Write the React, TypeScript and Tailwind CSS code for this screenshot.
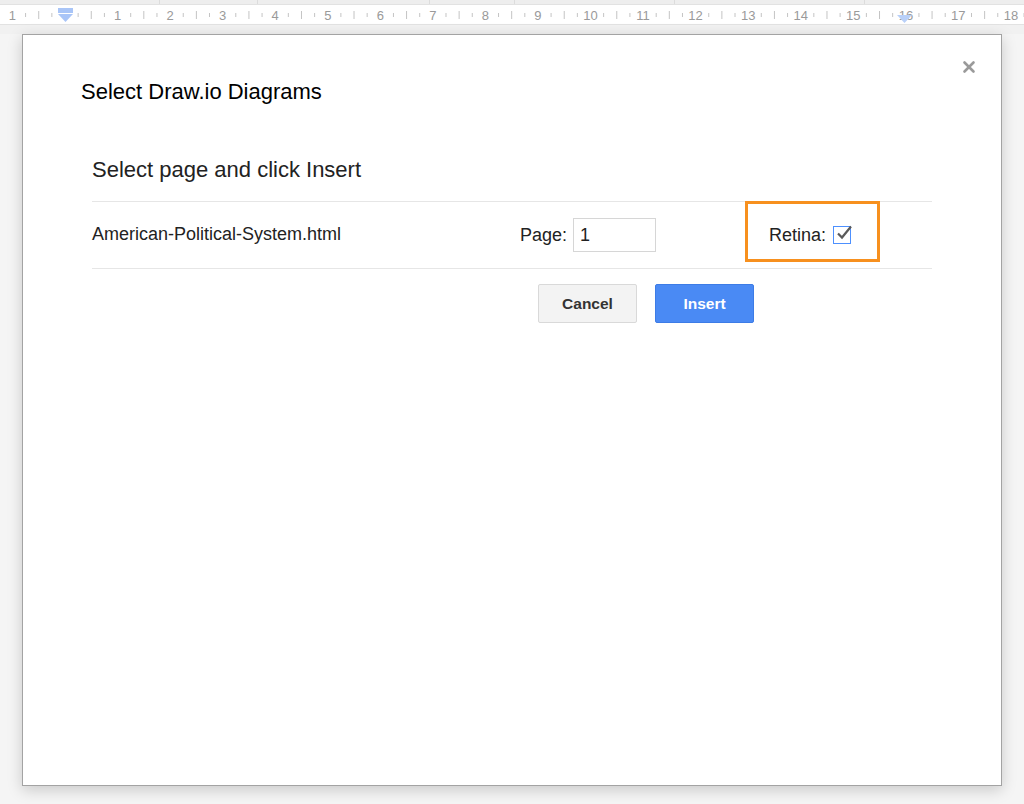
import { X } from 'lucide-react'

const UNIT = 52.55
const ORIGIN = 65

function Ruler() {
  const nums = Array.from({ length: 20 }, (_, i) => i - 1)
  return (
    <div className="h-[34px] bg-[#f1f1f1] shrink-0">
      <div className="h-[4px] bg-[#eeeeee] flex">
        <span className="w-[160px] border-r border-[#dcdcdc]" />
        <span className="w-[98px] border-r border-[#dcdcdc]" />
        <span className="w-[172px] border-r border-[#dcdcdc]" />
        <span className="w-[85px] border-r border-[#dcdcdc]" />
        <span className="w-[160px] border-r border-[#dcdcdc]" />
        <span className="w-[190px] border-r border-[#dcdcdc]" />
      </div>
      <svg width="1024" height="21" className="block bg-white border-y border-[#e2e2e2]">
        {nums.map((n) => {
          const x = ORIGIN + n * UNIT
          return (
            <g key={n}>
              {n !== 0 && n !== 16 && (
                <text
                  x={x}
                  y={14.5}
                  textAnchor="middle"
                  fontSize="13"
                  fill="#9a9a9a"
                  fontFamily="'Liberation Sans', Arial, sans-serif"
                >
                  {n === -1 ? 1 : n}
                </text>
              )}
              <line x1={x + UNIT / 4} x2={x + UNIT / 4} y1={8} y2={12} stroke="#c4c4c4" />
              <line x1={x + UNIT / 2} x2={x + UNIT / 2} y1={6} y2={14} stroke="#c4c4c4" />
              <line x1={x + (UNIT * 3) / 4} x2={x + (UNIT * 3) / 4} y1={8} y2={12} stroke="#c4c4c4" />
            </g>
          )
        })}
        <text x={906} y={14.5} textAnchor="middle" fontSize="13" fill="#9a9a9a" fontFamily="'Liberation Sans', Arial, sans-serif">
          16
        </text>
        <rect x={58} y={3} width={15} height={5} fill="#a9c5f7" />
        <polygon points="58,9 73,9 65.5,17" fill="#a9c5f7" />
        <polygon points="897,10 912,10 904.5,18" fill="#b9d0f8" />
      </svg>
    </div>
  )
}

function Checkbox() {
  return (
    <span className="relative w-[18px] h-[18px] border border-[#4d90fe] bg-white">
      <svg width="18" height="18" viewBox="0 0 18 18" className="absolute left-[1px] -top-[3px]">
        <path d="M3 9.5 L7 13.5 L16 2.5" fill="none" stroke="#5a5a5a" strokeWidth="2.2" />
      </svg>
    </span>
  )
}

export default function App() {
  return (
    <div
      className="w-[1024px] h-[804px] bg-[#f5f5f5] flex flex-col overflow-hidden"
      style={{ fontFamily: "'Liberation Sans', Arial, sans-serif" }}
    >
      <Ruler />
      <div className="pl-[22px]">
        <div className="w-[980px] h-[752px] bg-white border border-[#a3a3a3] shadow-[0_4px_14px_rgba(0,0,0,0.18)] flex flex-col">
          <div className="flex items-start justify-between pl-[58px] pr-[23px] pt-[44px]">
            <h1 className="text-[22px] leading-[26px] text-black">Select Draw.io Diagrams</h1>
            <X className="w-[18px] h-[18px] text-[#9a9a9a] -mt-[21px]" strokeWidth={3.5} />
          </div>

          <div className="px-[69px] pt-[52px]">
            <h2 className="text-[22px] leading-[26px] text-[#222]">Select page and click Insert</h2>

            <div className="mt-[18px] border-y border-[#e6e6e6] h-[68px] grid grid-cols-[428px_225px_1fr] items-center text-[18px] text-[#222]">
              <span className="-mt-[2px]">American-Political-System.html</span>
              <div className="flex items-center gap-[6px]">
                <span>Page:</span>
                <div className="w-[83px] h-[34px] border border-[#d6d6d6] flex items-center pl-[6px]">1</div>
              </div>
              <div className="relative h-full flex items-center pl-[24px]">
                <span className="absolute left-0 top-[-1px] w-[135px] h-[61px] border-[3px] border-[#f7901e]" />
                <span className="mr-[7px]">Retina:</span>
                <Checkbox />
              </div>
            </div>

            <div className="flex gap-[18px] pl-[446px] pt-[15px]">
              <button className="w-[99px] h-[39px] rounded-[2px] bg-[#f3f3f3] border border-[#d9d9d9] text-[15.5px] font-bold text-[#333]">
                Cancel
              </button>
              <button className="w-[99px] h-[39px] rounded-[2px] bg-[#4a8af4] border border-[#3d7ce6] text-[15.5px] font-bold text-white">
                Insert
              </button>
            </div>
          </div>
        </div>
      </div>
    </div>
  )
}
